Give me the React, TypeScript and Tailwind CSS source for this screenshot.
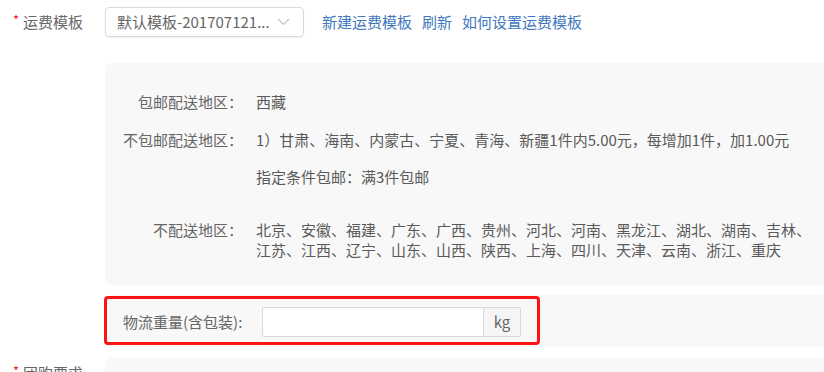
const FormLabel = ({ text }: { text: string }) => (
  <div className="w-[105px] h-[30px] shrink-0 flex items-center pl-[13px]">
    <span className="text-[13px] text-[#f5222d] mr-[4px] -mt-[4px]">*</span>
    <span>{text}</span>
  </div>
);

const Chevron = () => (
  <svg width="13" height="8" viewBox="0 0 13 8" fill="none">
    <polyline points="1,1 6.5,6.5 12,1" stroke="#c4c4c4" strokeWidth="1.2" />
  </svg>
);

export default function App() {
  return (
    <div className="w-[824px] h-[372px] overflow-hidden bg-white font-['Noto_Sans_CJK_SC',sans-serif] text-[15px] leading-5 text-[#666]">
      {/* 运费模板 */}
      <div className="flex pt-[7px]">
        <FormLabel text="运费模板" />
        <div className="flex-1 min-w-0">
          <div className="flex items-center h-[30px]">
            <div className="w-[199px] h-[30px] shrink-0 border border-[#d9d9d9] rounded-[4px] flex items-center justify-between pl-[11px] pr-[13px] shadow-[0_1px_2px_rgba(0,0,0,0.05)]">
              <span className="whitespace-nowrap">默认模板-201707121...</span>
              <Chevron />
            </div>
            <div className="ml-[18px] flex gap-[10px] text-[#4178be] whitespace-nowrap">
              <a>新建运费模板</a>
              <a>刷新</a>
              <a>如何设置运费模板</a>
            </div>
          </div>

          {/* template detail */}
          <div className="mt-[26px] bg-[#f8f8f8] rounded-l-[6px] pt-[29px] pb-[25px] whitespace-nowrap">
            <div className="flex">
              <div className="w-[138px] text-right">包邮配送地区：</div>
              <div className="pl-[13px] text-[#5a5a5a]">西藏</div>
            </div>
            <div className="flex mt-[18px]">
              <div className="w-[138px] text-right">不包邮配送地区：</div>
              <div className="pl-[13px] text-[#5a5a5a]">
                <div>1）甘肃、海南、内蒙古、宁夏、青海、新疆1件内5.00元，每增加1件，加1.00元</div>
                <div className="mt-[17px]">指定条件包邮：满3件包邮</div>
              </div>
            </div>
            <div className="flex mt-[33px]">
              <div className="w-[138px] text-right">不配送地区：</div>
              <div className="pl-[13px] text-[#5a5a5a]">
                <div>北京、安徽、福建、广东、广西、贵州、河北、河南、黑龙江、湖北、湖南、吉林、</div>
                <div>江苏、江西、辽宁、山东、山西、陕西、上海、四川、天津、云南、浙江、重庆</div>
              </div>
            </div>
          </div>

          {/* weight */}
          <div className="relative mt-[10px] bg-[#f8f8f8] rounded-l-[6px] pt-[12px] pb-[10px] pl-[18px] flex items-center">
            <div className="w-[139px] whitespace-nowrap">物流重量(含包装):</div>
            <div className="w-[222px] h-[30px] bg-white border border-[#d9d9d9] rounded-l-[2px]" />
            <div className="w-[37px] h-[30px] bg-[#f5f5f5] border border-l-0 border-[#d9d9d9] rounded-r-[2px] flex items-center justify-center">
              kg
            </div>
            <div className="absolute -left-[1px] top-[1px] w-[436px] h-[49px] border-[3px] border-[#ff1414] rounded-[4px]" />
          </div>
        </div>
      </div>

      {/* 团购要求 */}
      <div className="flex mt-[11px]">
        <FormLabel text="团购要求" />
        <div className="flex-1 h-[60px] bg-[#f8f8f8] rounded-l-[6px]" />
      </div>
    </div>
  );
}
